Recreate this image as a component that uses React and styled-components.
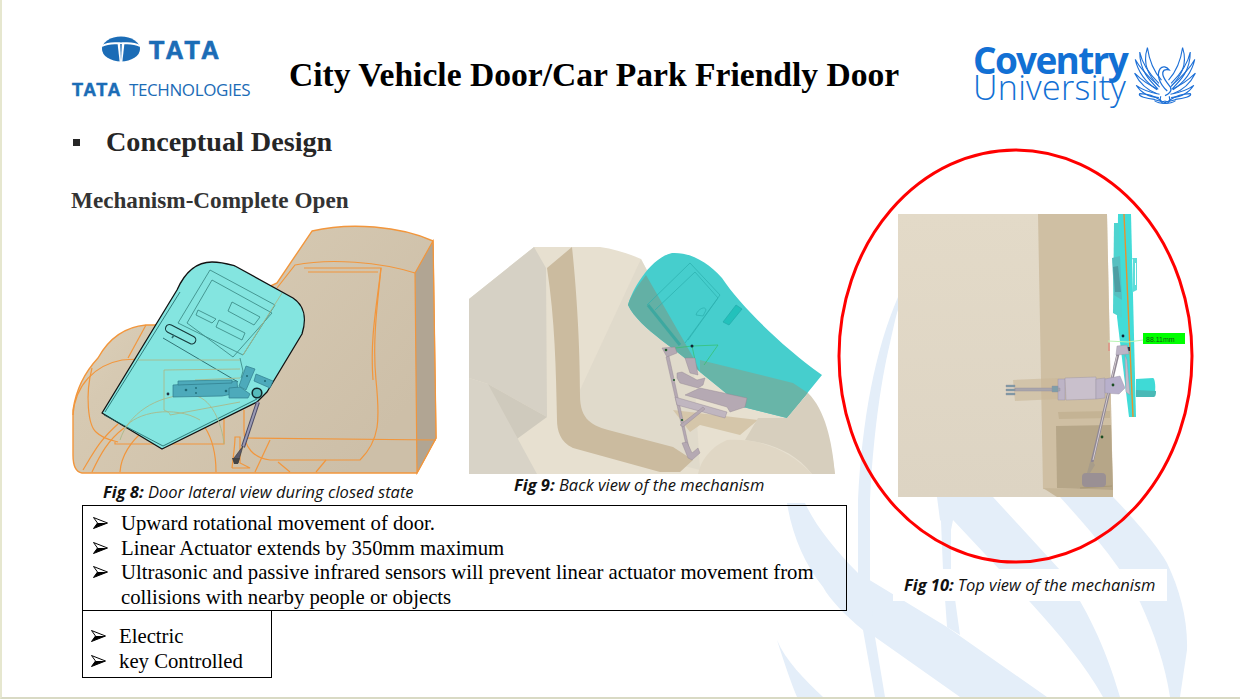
import React from "react";
import styled, { createGlobalStyle } from "styled-components";

const Global = createGlobalStyle`
  html, body { margin: 0; padding: 0; background: #fff; overflow: hidden; }
`;

const Slide = styled.div`
  position: relative;
  width: 1240px;
  height: 699px;
  box-sizing: border-box;
  padding: 37px 43px 0 68px;
  background: #fff;
  overflow: hidden;
  font-family: "Liberation Serif", serif;
  border-left: 2px solid #e6e7cf;
  border-bottom: 2px solid #d9dac4;
`;

const Watermark = styled.svg`
  position: absolute;
  left: -2px;
  top: 0;
  width: 1240px;
  height: 699px;
`;

const Header = styled.header`
  position: relative;
  display: flex;
  align-items: flex-start;
  height: 70px;
`;

const TataLogo = styled.div`
  display: flex;
  flex-direction: column;
  width: 180px;
  margin-left: 2px;
  color: #1b6cb6;
`;

const TataTop = styled.div`
  display: flex;
  align-items: center;
  gap: 8px;
  margin-left: 29px;
  height: 26px;
`;

const TataMark = styled.span`
  font: 700 25px/26px "Liberation Sans", sans-serif;
  letter-spacing: 3px;
  -webkit-text-stroke: 0.7px #1b6cb6;
`;

const TataBottom = styled.div`
  display: flex;
  align-items: center;
  gap: 7px;
  margin-top: 18px;
  height: 18px;
  white-space: nowrap;
`;

const TataSmall = styled.span`
  font: 700 18px/18px "Liberation Sans", sans-serif;
  letter-spacing: 1.5px;
  -webkit-text-stroke: 0.5px #1b6cb6;
`;

const TataTech = styled.span`
  font: 400 17px/18px "Open Sans", sans-serif;
  letter-spacing: -0.4px;
`;

const Title = styled.h1`
  margin: 19px 0 0 37px;
  font: 700 33.6px/38px "Liberation Serif", serif;
  color: #000;
  white-space: nowrap;
`;

const CoventryLogo = styled.div`
  display: flex;
  margin: 8px 0 0 auto;
  color: #1270d4;
`;

const CoventryWords = styled.div`
  display: flex;
  flex-direction: column;
  width: 160px;
  margin-left: -2px;
  white-space: nowrap;
`;

const CoventryBold = styled.span`
  font: 700 37px/30px "Open Sans", sans-serif;
  letter-spacing: -1.7px;
`;

const CoventryLight = styled.span`
  font: 300 34px/24px "Open Sans", sans-serif;
  letter-spacing: 0.3px;
`;

const Phoenix = styled.svg`
  width: 64px;
  height: 64px;
`;

const Body = styled.main`
  position: relative;
  display: flex;
  align-items: flex-start;
`;

const LeftColumn = styled.div`
  display: flex;
  flex-direction: column;
  width: 777px;
  flex: none;
`;

const SectionHead = styled.h2`
  display: flex;
  align-items: center;
  margin: 17px 0 0 0;
  height: 36px;
  font: 700 28.2px/36px "Liberation Serif", serif;
  color: #262626;
`;

const Square = styled.span`
  width: 7px;
  height: 7px;
  margin: 0 26px 0 3px;
  background: #262626;
`;

const SubHead = styled.h3`
  margin: 24px 0 0 1px;
  height: 32px;
  font: 700 23.2px/32px "Liberation Serif", serif;
  color: #333;
`;

const FigureRow = styled.div`
  display: flex;
  gap: 29px;
  margin-top: 9px;
`;

const Figure = styled.figure`
  display: flex;
  flex-direction: column;
  margin: ${(p) => p.$top || 0}px 0 0 0;
`;

const Drawing = styled.svg`
  display: block;
  width: ${(p) => p.$w}px;
  height: ${(p) => p.$h}px;
`;

const Caption = styled.figcaption`
  margin-top: ${(p) => p.$top || 0}px;
  padding-left: ${(p) => p.$left || 0}px;
  height: 20px;
  font: italic 400 16.5px/20px "Open Sans", sans-serif;
  color: #111;
  white-space: nowrap;
  b { font-weight: 700; }
`;

const NoteBox = styled.ul`
  list-style: none;
  box-sizing: border-box;
  position: relative;
  width: ${(p) => p.$w}px;
  height: ${(p) => p.$h}px;
  margin: ${(p) => p.$mt}px 0 0 12px;
  padding: ${(p) => p.$pt}px 10px 0 ${(p) => p.$pl}px;
  border: 1px solid #000;
  background: transparent;
  font: 400 20.75px/24.5px "Liberation Serif", serif;
  color: #000;
`;

const NoteItem = styled.li`
  display: flex;
  align-items: flex-start;
`;

const Arrow = styled.svg`
  flex: none;
  width: 15px;
  height: 12px;
  margin: 6px 13px 0 0;
`;

const RightColumn = styled.aside`
  display: flex;
  flex-direction: column;
  margin: 40px 0 0 -11px;
`;

const CaptionPlate = styled.div`
  display: flex;
  align-items: center;
  width: 274px;
  height: 32px;
  margin: 4px 0 0 57px;
  padding-left: 11px;
  box-sizing: border-box;
  background: #fff;
  font: italic 400 16.5px/20px "Open Sans", sans-serif;
  color: #111;
  white-space: nowrap;
  b { font-weight: 700; margin-right: 4px; }
`;

const ArrowIcon = () => (
  <Arrow viewBox="0 0 15 12">
    <path d="M0.5 0.5 L14.5 6 L0.5 11.5 L4.5 6 Z" fill="#fff" stroke="#000" strokeWidth="1" />
    <path d="M0.5 11.5 L14.5 6 L4.5 6 Z" fill="#000" />
  </Arrow>
);

const Item = ({ children }) => (
  <NoteItem>
    <ArrowIcon />
    <span>{children}</span>
  </NoteItem>
);

const Globe = () => (
  <svg width="40" height="28" viewBox="0 0 40 28" style={{ flex: "none" }}>
    <ellipse cx="20" cy="13" rx="19" ry="12.5" fill="#1b6cb6" />
    <path d="M1 10 C8 6 14 7 20 7.5 C26 7 32 6 39 10" fill="none" stroke="#fff" strokeWidth="2" />
    <path d="M16.5 7 L18.8 27 L21.2 27 L23.5 7 Z" fill="#fff" />
    <path d="M19.2 8 L20 26 L20.8 8 Z" fill="#1b6cb6" />
  </svg>
);

const feathers = [
  "M628 172 C598 140 572 105 590 48 C596 90 612 125 634 150",
  "M622 176 C596 150 566 120 566 62 C574 100 596 130 626 160",
  "M620 180 C590 160 562 130 552 85 C570 118 596 142 624 166",
  "M620 192 C592 182 566 160 550 128 C574 152 600 168 624 178",
  "M626 204 C600 204 572 192 555 166 C580 184 606 190 628 194",
  "M634 214 C610 198 585 192 566 192 C558 200 590 208 612 210 C626 214 640 222 644 214",
];

const PhoenixMark = () => (
  <Phoenix viewBox="545 40 200 200" fill="none" stroke="#1c6fd6" strokeWidth="3.4">
    {feathers.map((d) => (
      <path key={d} d={d} />
    ))}
    <g transform="translate(1290 0) scale(-1 1)">
      {feathers.map((d) => (
        <path key={d} d={d} />
      ))}
    </g>
    <path d="M652 184 C626 160 618 132 630 114 C638 104 650 108 658 118 C648 116 640 116 638 126 C636 144 652 156 662 172 C668 184 656 194 645 198" strokeWidth="4" />
    <path d="M612 214 C628 226 662 226 678 214" />
    <path d="M632 200 C626 216 638 228 646 218 C652 228 664 216 658 200" />
  </Phoenix>
);

const orange = "#f2963c";

const Fig8 = () => (
  <Drawing $w={370} $h={252} viewBox="70 225 370 252">
    <defs>
      <linearGradient id="bodyA" x1="0" y1="0" x2="1" y2="0.6">
        <stop offset="0" stopColor="#e3d7c0" />
        <stop offset="0.35" stopColor="#d6c9b2" />
        <stop offset="1" stopColor="#cdbfa8" />
      </linearGradient>
    </defs>
    <path
      d="M82 473 C75 472 73 465 73 455 L73 410 C76 390 85 372 98 358 C108 340 124 327 146 325 L188 325 L277 283 L312 231 C350 222 400 226 433 241 L436 438 L417 473 Z"
      fill="url(#bodyA)"
      stroke={orange}
      strokeWidth="1.4"
    />
    <path d="M415 273 L433 241 L436 438 L417 473 Z" fill="#b1a593" stroke={orange} strokeWidth="1.2" />
    <g fill="none" stroke={orange} strokeWidth="1.2">
      <path d="M415 273 C380 262 330 258 295 265 L277 288" />
      <path d="M304 268 L381 268 C378 300 372 340 376 380 C380 420 380 440 360 460 L270 460 C254 458 244 448 244 430 L244 410" />
      <path d="M308 272 L378 272" />
      <path d="M381 268 C376 310 370 340 373 380" />
      <path d="M73 415 C75 385 95 365 122 360 C148 358 170 360 190 358" />
      <path d="M92 368 C85 395 88 425 96 432 C104 440 116 441 118 442" />
      <path d="M83 470 C95 450 100 440 118 424" />
      <path d="M92 472 C100 455 108 440 124 428" />
      <path d="M146 325 L128 358" />
      <path d="M115 442 L115 444 L224 444 L224 415" />
      <path d="M120 472 C122 440 160 412 190 414 C195 414 216 430 216 472" />
      <path d="M244 438 L436 440" />
      <path d="M232 468 C234 452 235 440 235 437 L240 437 L240 463 L250 468 L232 468" />
      <path d="M270 440 L255 472" />
      <path d="M278 462 L290 472" />
      <path d="M326 460 L316 472" />
    </g>
    <path
      d="M102 413 L177 290 C185 272 197 262 212 262 C222 262 228 264 235 266 L293 298 C304 305 307 318 302 334 L267 392 L257 402 L162 449 Z"
      fill="#84e5e0"
      stroke="#111"
      strokeWidth="1.3"
      strokeLinejoin="round"
    />
    <path d="M105 412 L180 292 M104 415 L163 446 L257 399" fill="none" stroke="#1b5f5f" strokeWidth="0.8" />
    <g fill="none" stroke="#3e8f8a" strokeWidth="0.9">
      <path d="M210 270 L275 305 L243 355 L178 323 Z" />
      <path d="M212 280 L272 313 L233 357 L187 323 Z" />
      <path d="M232 302 L260 317 L254 325 L228 311 Z" />
      <path d="M198 310 L216 319 L212 323 L196 315 Z" />
      <path d="M219 320 L245 333 L242 340 L216 327 Z" />
      <path d="M163 338 L238 382" stroke="#26686a" />
      <path d="M240 358 L243 371 L241 378" />
    </g>
    <g fill="none" stroke="#a9b98a" strokeWidth="0.9">
      <path d="M164 370 L240 369 M164 370 L164 410 C168 412 170 413 170 415 L240 402" />
      <path d="M120 440 C128 415 155 395 190 395 C212 395 222 425 224 444" />
      <path d="M125 428 C135 412 175 405 200 420" />
      <path d="M195 380 L240 378" />
      <path d="M243 355 L282 293" />
      <path d="M138 360 L240 360" />
    </g>
    <rect x="166" y="326" width="33" height="8" rx="4" transform="rotate(27 182 335) translate(-2 5)" fill="#84e5e0" stroke="#16393b" strokeWidth="1.1" />
    <path d="M174 335 L172 338" stroke="#2f6f70" strokeWidth="1.5" />
    <g fill="#4daabb" stroke="#2f7c8c" strokeWidth="0.7">
      <path d="M173 385 L237 381 L238 393 L222 396 L173 397 Z" />
      <path d="M229 388 L240 387 L250 394 L248 398 L229 398 Z" />
      <path d="M246 366 L255 369 L246 390 L239 386 Z" />
      <path d="M256 374 L273 381 L270 388 L254 381 Z" />
      <path d="M178 381 L232 380 L232 383 L178 385 Z" />
    </g>
    <g fill="#1f6a75">
      <circle cx="186" cy="390" r="1.3" />
      <circle cx="196" cy="388" r="0.9" />
      <circle cx="196" cy="393" r="0.9" />
      <circle cx="226" cy="391" r="1.3" />
      <circle cx="247" cy="376" r="1" />
      <circle cx="265" cy="381" r="1" />
      <circle cx="168" cy="394" r="1.4" fill="#234" />
    </g>
    <circle cx="257" cy="393" r="4.8" fill="#5bb" stroke="#10282c" strokeWidth="1.6" />
    <path d="M258 402 L243 447" stroke="#4a4a66" strokeWidth="4" />
    <path d="M258 402 L243 447" stroke="#9a9ab4" strokeWidth="2" />
    <path d="M243 446 L241 453 L238 463 L234 458 Z" fill="#5a5a6a" stroke="#333" strokeWidth="0.6" />
    <path d="M232 458 L240 458 L238 464 L234 464 Z" fill="#444" />
  </Drawing>
);

const Fig9 = () => (
  <Drawing $w={366} $h={227} viewBox="469 247 366 227">
    <path d="M469 299 L534 247 L600 247 C615 249 630 254 641 259 L693 357 C760 365 820 400 833 460 L835 474 L469 474 Z" fill="#e7e0d0" />
    <path d="M469 299 L534 247 L546 268 L547 417 L488 384 L469 378 Z" fill="#d6d1c5" />
    <path d="M488 384 L547 417 L469 474 Z" fill="#cfcabd" />
    <path d="M469 378 L488 384 L537 474 L469 474 Z" fill="#d8d3c7" />
    <path d="M580 390 L641 259 L693 357 L700 470 L580 440 Z" fill="#dcd6c8" opacity="0.6" />
    <path d="M547 268 L572 247 C576 285 580 340 580 395 C580 420 592 426 612 431 L673 447 L693 460 L680 472 L660 472 L573 448 C560 442 557 430 557 420 C556 370 555 320 547 268 Z" fill="#cbbb9f" />
    <path d="M673 410 L758 420 L740 435 L700 425 L690 432 Z" fill="#d5c6aa" />
    <path d="M628 305 C632 290 650 258 672 253 C690 252 708 262 722 278 C740 305 780 345 822 375 L787 418 L743 407 L700 372 C680 350 640 330 628 305 Z" fill="#46cecd" />
    <path d="M628 305 C630 297 636 288 646 275 L693 357 L700 372 C680 350 640 330 628 305 Z" fill="#63b0a5" />
    <path d="M700 360 L793 383 L808 393 L787 418 L743 407 L700 372 Z" fill="#68b5a8" />
    <path d="M698 474 C700 462 710 447 727 440 C760 438 790 450 812 474 Z" fill="#e0d7c5" />
    <path d="M758 418 L787 418 L808 393 C825 410 832 440 835 474 L812 474 C795 452 770 443 745 440 Z" fill="#d7cfbe" />
    <g fill="none" stroke="#2bafae" strokeWidth="0.7">
      <path d="M647 305 L690 263 L720 295 L685 343" />
      <path d="M655 310 L695 272 L718 298 L688 340" />
      <path d="M696 315 C697 310 705 305 706 310 L703 316 Z" />
    </g>
    <path d="M648 305 L680 345" stroke="#2da69f" strokeWidth="3" opacity="0.7" />
    <path d="M723 322 L736 305 L742 309 L729 325 Z" fill="#22c1bb" stroke="#2aa" strokeWidth="0.7" />
    <g stroke="#34c06a" strokeWidth="0.7" fill="none">
      <path d="M667 349 L692 346 L718 345 L704 365" />
      <path d="M692 346 L695 360" />
    </g>
    <circle cx="692" cy="346" r="1.5" fill="#123" />
    <g fill="#b5a9b3" stroke="#8f8491" strokeWidth="0.4">
      <path d="M662 348 L675 347 L677 353 L667 357 Z" />
      <path d="M666 357 L669 356 L691 457 L689 458 Z" />
      <path d="M685 358 L695 358 L698 375 L690 373 Z" />
      <path d="M677 373 L682 372 L697 380 L705 378 L703 385 L698 388 L680 383 L677 378 Z" />
      <path d="M685 395 L700 388 L747 398 L745 407 L730 412 L727 407 Z" />
      <path d="M675 397 L727 412 L725 418 L677 405 Z" fill="#c0b6c0" />
      <path d="M680 425 L703 407 L705 409 L683 427 Z" />
      <path d="M682 443 L687 442 L692 453 L698 448 L700 453 L692 460 L688 458 Z" />
    </g>
    <g fill="#1f5a2a">
      <circle cx="666" cy="350" r="1.3" />
      <circle cx="674" cy="380" r="1.1" />
      <circle cx="682" cy="420" r="1.1" />
    </g>
  </Drawing>
);

const Fig10 = () => (
  <Drawing $w={360} $h={418} viewBox="836 147 360 418">
    <rect x="898" y="214" width="297" height="283" fill="#fff" />
    <defs>
      <linearGradient id="sand" x1="0" y1="0" x2="0" y2="1">
        <stop offset="0" stopColor="#e3dac8" />
        <stop offset="1" stopColor="#ddd4c3" />
      </linearGradient>
    </defs>
    <path d="M898 214 L1107 214 L1113 497 L898 497 Z" fill="url(#sand)" />
    <path d="M1038 214 L1107 214 L1113 497 L1043 489 Z" fill="#cfbfa3" />
    <path d="M1057 497 L1113 497 L1113 490 L1043 488 Z" fill="#c6b698" />
    <path d="M1056 426 L1111 425 L1113 490 L1057 488 Z" fill="#b6a688" />
    <path d="M1058 412 L1110 411 L1110 418 L1059 419 Z" fill="#c4b394" />
    <path d="M1013 380 L1058 378 L1058 399 L1015 401 Z" fill="#c9b898" opacity="0.6" />
    <path d="M1080 488 L1112 486" stroke="#a89877" strokeWidth="1" />
    <g>
      <path d="M1118 214 L1131 214 L1136 417 L1129 417 L1117 317 Z" fill="#42dcd8" />
      <path d="M1114 223 L1119 223 L1122 318 L1113 313 Z" fill="#4ed4d0" />
      <path d="M1112 258 L1120 256 L1122 300 L1114 295 Z" fill="#56bfc0" />
      <path d="M1113 267 L1118 266 L1121 292 L1115 292 Z" fill="#4d9ea3" />
      <path d="M1132 258 L1137 258 L1137 290 L1133 292 L1133 260 Z" fill="#5ddcd9" />
      <path d="M1135 263 L1136 263 L1136 285 L1135 285 Z" fill="#fff" />
      <path d="M1124 214 L1133 417" stroke="#e8922e" strokeWidth="1.4" />
      <path d="M1136 379 L1153 378 C1156 379 1156 396 1153 397 L1136 397 Z" fill="#3fdad6" />
      <path d="M1136 390 L1156 391 C1156 396 1155 397 1153 397 L1136 397 Z" fill="#49b9b6" />
    </g>
    <path d="M1108 341 L1128 342 L1143 340" stroke="#b8f5b4" strokeWidth="1.2" fill="none" />
    <path d="M1109 343 L1109 351" stroke="#ee6666" strokeWidth="0.8" />
    <rect x="1143" y="333" width="42" height="11" fill="#00ff00" />
    <text x="1146" y="342" fontFamily="'Liberation Sans', sans-serif" fontSize="7" fill="#145a14">88.11mm</text>
    <circle cx="1123" cy="336" r="1.4" fill="#123" />
    <rect x="1126" y="347" width="4" height="4" fill="#334" />
    <path d="M1118 354 L1092 462" stroke="#8f8794" strokeWidth="3" />
    <path d="M1117 356 L1093 460" stroke="#d4ccd0" strokeWidth="1" />
    <g fill="#bdb4c6" stroke="#958d9f" strokeWidth="0.4">
      <path d="M1117 346 L1127 345 L1129 354 L1116 355 Z" />
      <path d="M1125 355 L1127 360 L1130 395 L1126 392 Z" fill="#c4bccb" />
      <path d="M1058 379 L1065 379 L1065 400 L1058 400 Z" />
      <path d="M1065 378 L1096 377 L1096 399 L1066 400 Z" fill="#c9c0cc" />
      <path d="M1096 379 L1105 378 L1105 398 L1096 399 Z" />
      <path d="M1105 379 L1120 376 L1125 388 L1119 394 L1105 393 Z" fill="#b8b0cc" />
      <path d="M1015 388 L1060 388 L1060 391 L1015 391 Z" fill="#a9a5ab" />
      <path d="M1006 385 L1015 385 L1015 387 L1006 387 Z M1006 389 L1015 389 L1015 391 L1006 391 Z M1006 393 L1015 393 L1015 395 L1006 395 Z" fill="#7c9aa6" />
      <path d="M1052 386 L1058 386 L1058 392 L1052 392 Z" fill="#7f9ea8" />
    </g>
    <path d="M1093 462 L1095 465 L1090 473 L1087 473 L1090 462 Z" fill="#a79c8a" />
    <rect x="1082" y="473" width="24" height="14" rx="4" fill="#9a9094" />
    <g fill="#1a4d22">
      <circle cx="1113" cy="385" r="1.4" />
      <circle cx="1102" cy="437" r="1.4" />
    </g>
    <ellipse cx="1015.5" cy="356" rx="176.5" ry="206" fill="none" stroke="#ff0000" strokeWidth="3" />
  </Drawing>
);

const WatermarkArt = () => (
  <Watermark viewBox="0 0 1240 699">
    <g fill="#e4eef9">
      <path d="M787 503 L805 503 C815 525 835 550 858 573 L947 627 L1047 697 L960 697 L875 637 L863 630 C845 615 830 600 823 587 C805 565 792 535 787 503 Z" />
      <path d="M898 297 C875 350 862 420 858 500 L858 590 L863 630 L875 697 L885 697 L875 637 L870 590 L870 500 C873 440 880 385 890 343 C893 330 896 315 898 310 Z" />
      <path d="M777 640 C785 665 790 680 797 697 L823 697 C805 680 785 660 777 640 Z" />
      <path d="M940 497 L951 497 L951 570 L960 635 L947 627 L943 570 Z" />
      <path d="M937 497 L993 497 L1060 570 C1085 605 1105 645 1120 697 L1103 697 C1085 665 1060 635 1030 602 L953 520 L951 530 L940 520 Z" />
      <path d="M1060 497 L1113 497 C1140 525 1160 550 1167 563 C1180 590 1188 620 1187 650 L1180 697 L1170 697 C1165 665 1155 635 1140 602 C1120 565 1090 530 1060 497 Z" />
    </g>
  </Watermark>
);

export default function App() {
  return (
    <>
      <Global />
      <Slide>
        <WatermarkArt />
        <Header>
          <TataLogo>
            <TataTop>
              <Globe />
              <TataMark>TATA</TataMark>
            </TataTop>
            <TataBottom>
              <TataSmall>TATA</TataSmall>
              <TataTech>TECHNOLOGIES</TataTech>
            </TataBottom>
          </TataLogo>
          <Title>City Vehicle Door/Car Park Friendly Door</Title>
          <CoventryLogo>
            <CoventryWords>
              <CoventryBold>Coventry</CoventryBold>
              <CoventryLight>University</CoventryLight>
            </CoventryWords>
            <PhoenixMark />
          </CoventryLogo>
        </Header>
        <Body>
          <LeftColumn>
            <SectionHead>
              <Square />
              Conceptual Design
            </SectionHead>
            <SubHead>Mechanism-Complete Open</SubHead>
            <FigureRow>
              <Figure>
                <Fig8 />
                <Caption $top={5} $left={33}>
                  <b>Fig 8:</b> Door lateral view during closed state
                </Caption>
              </Figure>
              <Figure $top={22}>
                <Fig9 />
                <Caption $top={1} $left={45}>
                  <b>Fig 9:</b> Back view of the mechanism
                </Caption>
              </Figure>
            </FigureRow>
            <NoteBox $w={765} $h={106} $mt={3} $pt={5} $pl={10}>
              <Item>Upward rotational movement of door.</Item>
              <Item>Linear Actuator extends by 350mm maximum</Item>
              <Item>Ultrasonic and passive infrared sensors will prevent linear actuator movement from collisions with nearby people or objects</Item>
            </NoteBox>
            <NoteBox $w={190} $h={68} $mt={-1} $pt={13} $pl={8}>
              <Item>Electric</Item>
              <Item>key Controlled</Item>
            </NoteBox>
          </LeftColumn>
          <RightColumn>
            <Fig10 />
            <CaptionPlate>
              <b>Fig 10:</b> Top view of the mechanism
            </CaptionPlate>
          </RightColumn>
        </Body>
      </Slide>
    </>
  );
}
